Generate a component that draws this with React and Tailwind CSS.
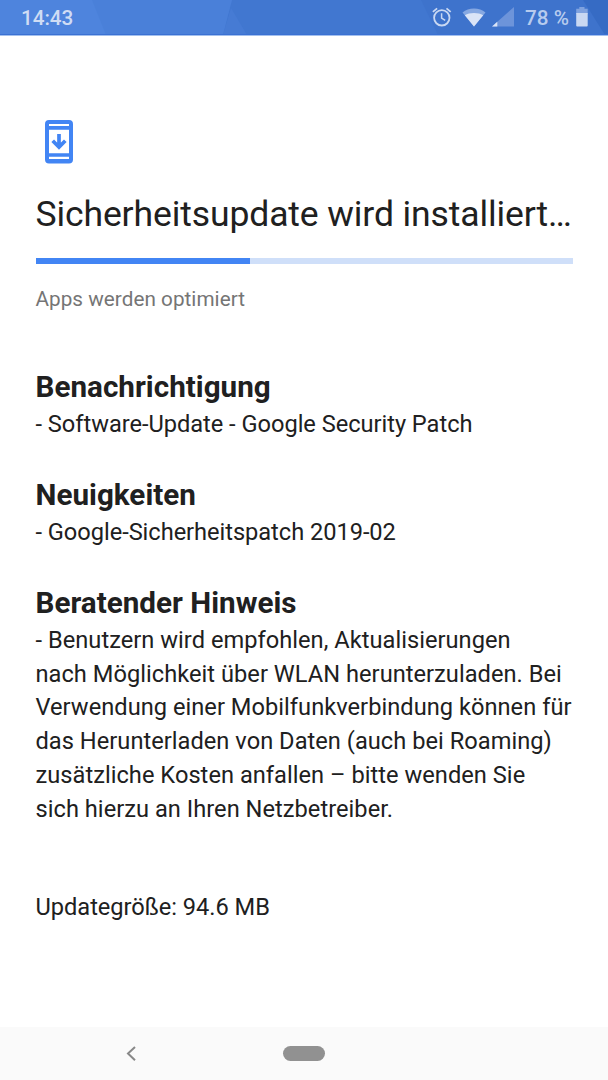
import React from "react";

const sections = [
  {
    title: "Benachrichtigung",
    tracking: "tracking-[-0.030px]",
    lines: ["- Software-Update - Google Security Patch"],
  },
  {
    title: "Neuigkeiten",
    tracking: "tracking-[-0.040px]",
    lines: ["- Google-Sicherheitspatch 2019-02"],
  },
  {
    title: "Beratender Hinweis",
    tracking: "tracking-[0.030px]",
    lines: [
      "- Benutzern wird empfohlen, Aktualisierungen",
      "nach Möglichkeit über WLAN herunterzuladen. Bei",
      "Verwendung einer Mobilfunkverbindung können für",
      "das Herunterladen von Daten (auch bei Roaming)",
      "zusätzliche Kosten anfallen – bitte wenden Sie",
      "sich hierzu an Ihren Netzbetreiber.",
    ],
  },
];

const AlarmIcon = () => (
  <svg
    className="w-[20px] h-[20px]"
    viewBox="0 0 20 20"
    fill="none"
    stroke="#c9d8f2"
    strokeWidth="1.8"
  >
    <circle cx="9.800" cy="10.800" r="7.700" />
    <path d="M9.600 6.200V11l3.600 2.400" strokeWidth="1.500" />
    <path d="M0.900 4.900L5.100 1.400M18.700 4.900L14.500 1.400" />
  </svg>
);

const WifiIcon = () => (
  <svg className="w-[24px] h-[19px]" viewBox="0 0 24 19">
    <path
      d="M12 18.600L0.500 4.400C3.600 2 7.500 0.600 12 0.600s8.400 1.400 11.500 3.800z"
      fill="#86a8e2"
    />
    <path
      d="M12 18.600L2.800 7.200C5.300 5.700 8.500 5 12 5s6.700.7 9.200 2.200z"
      fill="#dae4f7"
    />
  </svg>
);

const SignalIcon = () => (
  <svg className="w-[22px] h-[20px]" viewBox="0 0 22 20">
    <path d="M0 19.500L22 0V19.500z" fill="#6d94da" />
    <path d="M0 19.500L5.300 14.800V19.500z" fill="#dae4f7" />
  </svg>
);

const BatteryIcon = () => (
  <svg className="w-[12px] h-[20px]" viewBox="0 0 12 20">
    <path d="M3.300 0h5.200v1.800H11.700V7H0.200V1.800h3.100z" fill="#7fa2df" />
    <path
      d="M0.200 6H11.700v12.600a.9.900 0 0 1-.9.900H1.100a.9.900 0 0 1-.9-.9z"
      fill="#c9d8f2"
    />
  </svg>
);

const StatusBar = () => (
  <div className="relative h-[36px] shrink-0 overflow-hidden bg-[#4177d0]">
    {/* Wallpaper facets */}
    <svg className="absolute inset-0 w-full h-full" viewBox="0 0 608 36">
      <path d="M0 0H232L223 35H0z" fill="#4a80d9" />
      <path d="M0 0H92L106 35H0z" fill="#4e84dd" />
      <path d="M231 8L247 35H223z" fill="#467bd4" />
      <path d="M421 0H583L606 35H438z" fill="#3e73cc" />
      <path d="M583 0H608V35H605z" fill="#366bc4" />
      <path d="M0 34H608V35H0z" fill="#3b71d3" />
      <path d="M0 35H608V36H0z" fill="#a3c0ee" />
    </svg>
    <div className="relative flex h-[35px] items-center text-[20.700px] leading-none font-medium">
      <span className="ml-[21px] text-[#cfdcf4] tracking-[-0.050px] translate-y-[1px]">
        14:43
      </span>
      <div className="ml-auto flex items-center pr-[20px]">
        <AlarmIcon />
        <div className="ml-[10px]">
          <WifiIcon />
        </div>
        <div className="ml-[6px]">
          <SignalIcon />
        </div>
        <span className="ml-[11px] text-[#b7cbee] translate-y-[1px] whitespace-nowrap">
          78 %
        </span>
        <div className="ml-[7px]">
          <BatteryIcon />
        </div>
      </div>
    </div>
  </div>
);

const UpdateIcon = () => (
  <svg className="ml-[9px] w-[29px] h-[44px] shrink-0" viewBox="0 0 29 44">
    <path
      fill="#4285f4"
      fillRule="evenodd"
      d="M4 0H24a4 4 0 0 1 4 4V39.500a4 4 0 0 1-4 4H4a4 4 0 0 1-4-4V4a4 4 0 0 1 4-4zM4 3.900V5.900H24V3.900zM4 9.800V33.200H24V9.800zM4 36.700V38.900H24V36.700z"
    />
    <path
      d="M14 14V26M7.700 20.800L14 27.100L20.300 20.800"
      fill="none"
      stroke="#4285f4"
      strokeWidth="3.700"
    />
  </svg>
);

const ProgressBar = ({ value }) => (
  <div className="h-[6px] w-[537px] shrink-0 bg-[#cfdff9]">
    <div className="h-full bg-[#4285f4]" style={{ width: `${value}%` }} />
  </div>
);

const NavigationBar = () => (
  <div className="flex h-[53px] shrink-0 items-center bg-[#fafafa]">
    <svg
      className="ml-[126px] w-[11px] h-[16px]"
      viewBox="0 0 11 16"
      fill="none"
      stroke="#888888"
      strokeWidth="2"
    >
      <path d="M9 1L2 7.500L9 14.200" />
    </svg>
    <div className="ml-[146px] h-[15px] w-[42px] rounded-full bg-[#919191]" />
  </div>
);

const App = () => {
  return (
    <div className="flex h-[1080px] w-[608px] flex-col overflow-hidden bg-white font-[Roboto,sans-serif] text-[#202020]">
      <StatusBar />

      <main className="flex flex-1 flex-col px-[35.500px] pt-[84px]">
        <UpdateIcon />

        <h1 className="mt-[29px] h-[42px] text-[35.500px] leading-[42px] tracking-[-0.110px] whitespace-nowrap">
          Sicherheitsupdate wird installiert…
        </h1>

        <div className="mt-[23px]">
          <ProgressBar value={40} />
        </div>
        <p className="mt-[23px] h-[24px] text-[20.700px] leading-[24px] tracking-[0.040px] text-[#757575]">
          Apps werden optimiert
        </p>

        {/* Release notes */}
        <div className="mt-[56.450px] flex flex-col gap-[33.750px]">
          {sections.map((section) => (
            <section key={section.title}>
              <h2 className="text-[29.600px] leading-[40.500px] font-bold tracking-[0.030px] whitespace-nowrap">
                {section.title}
              </h2>
              {section.lines.map((line) => (
                <p
                  key={line}
                  className={`text-[23.630px] leading-[33.750px] whitespace-nowrap ${section.tracking}`}
                >
                  {line}
                </p>
              ))}
            </section>
          ))}
        </div>

        <p className="mt-[64.300px] text-[23.630px] leading-[33.750px] tracking-[-0.030px]">
          Updategröße: 94.6 MB
        </p>
      </main>

      <NavigationBar />
    </div>
  );
};

export default App;
